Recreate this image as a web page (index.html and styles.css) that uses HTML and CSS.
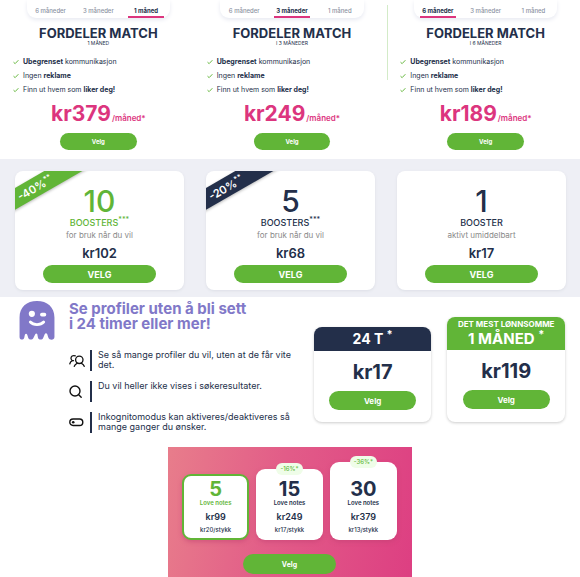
FILE: index.html
```html
<!DOCTYPE html>
<html lang="no">

<head>
  <meta charset="UTF-8">
  <meta name="viewport" content="width=device-width, initial-scale=1">
  <title>Fordeler Match</title>
  <link rel="stylesheet" href="styles.css">
</head>

<body>
  <svg width="0" height="0" class="defs" aria-hidden="true">
    <symbol id="check" viewBox="0 0 7 6">
      <path d="M.6 3.2 2.5 4.9 6.3.9" fill="none" stroke="#61b537" stroke-width="1.1" />
    </symbol>
  </svg>

  <section class="plans">
    <div class="plan">
      <nav class="tabs">
        <a href="#">6 måneder</a>
        <a href="#">3 måneder</a>
        <a href="#" class="active">1 måned</a>
      </nav>
      <h2>FORDELER MATCH</h2>
      <p class="period">1 MÅNED</p>
      <ul>
        <li><svg class="check"><use href="#check" /></svg><span><b>Ubegrenset</b> kommunikasjon</span></li>
        <li><svg class="check"><use href="#check" /></svg><span>Ingen <b>reklame</b></span></li>
        <li><svg class="check"><use href="#check" /></svg><span>Finn ut hvem som <b>liker deg!</b></span></li>
      </ul>
      <p class="plan-price">kr379 <small>/måned*</small></p>
      <button class="btn plan-btn">Velg</button>
    </div>
    <div class="plan">
      <nav class="tabs">
        <a href="#">6 måneder</a>
        <a href="#" class="active">3 måneder</a>
        <a href="#">1 måned</a>
      </nav>
      <h2>FORDELER MATCH</h2>
      <p class="period">I 3 MÅNEDER</p>
      <ul>
        <li><svg class="check"><use href="#check" /></svg><span><b>Ubegrenset</b> kommunikasjon</span></li>
        <li><svg class="check"><use href="#check" /></svg><span>Ingen <b>reklame</b></span></li>
        <li><svg class="check"><use href="#check" /></svg><span>Finn ut hvem som <b>liker deg!</b></span></li>
      </ul>
      <p class="plan-price">kr249 <small>/måned*</small></p>
      <button class="btn plan-btn">Velg</button>
    </div>
    <div class="plan divided">
      <nav class="tabs">
        <a href="#" class="active">6 måneder</a>
        <a href="#">3 måneder</a>
        <a href="#">1 måned</a>
      </nav>
      <h2>FORDELER MATCH</h2>
      <p class="period">I 6 MÅNEDER</p>
      <ul>
        <li><svg class="check"><use href="#check" /></svg><span><b>Ubegrenset</b> kommunikasjon</span></li>
        <li><svg class="check"><use href="#check" /></svg><span>Ingen <b>reklame</b></span></li>
        <li><svg class="check"><use href="#check" /></svg><span>Finn ut hvem som <b>liker deg!</b></span></li>
      </ul>
      <p class="plan-price">kr189 <small>/måned*</small></p>
      <button class="btn plan-btn">Velg</button>
    </div>
  </section>

  <section class="boosters">
    <div class="booster best">
      <div class="ribbon">-40%<sup>**</sup></div>
      <p class="amount">10</p>
      <h3>BOOSTERS<sup>***</sup></h3>
      <p class="note">for bruk når du vil</p>
      <p class="booster-price">kr102</p>
      <button class="btn booster-btn">VELG</button>
    </div>
    <div class="booster">
      <div class="ribbon">-20%<sup>**</sup></div>
      <p class="amount">5</p>
      <h3>BOOSTERS<sup>***</sup></h3>
      <p class="note">for bruk når du vil</p>
      <p class="booster-price">kr68</p>
      <button class="btn booster-btn">VELG</button>
    </div>
    <div class="booster">
      <p class="amount">1</p>
      <h3>BOOSTER</h3>
      <p class="note">aktivt umiddelbart</p>
      <p class="booster-price">kr17</p>
      <button class="btn booster-btn">VELG</button>
    </div>
  </section>

  <section class="incognito">
    <svg class="ghost" viewBox="0 0 35 38">
      <path d="M.5 16C.5 6 7.500 0 17.500 0s17 6 17 16v19c0 3.500-5 3.500-6 .5l-1-3c-.5-1.500-2-1.500-2.500 0l-1.500 3.500c-.8 2-4 2-5 0L17.800 32.500c-.5-1-1.500-1-2 0L14 36c-1 2-4 2-5 0l-1-3c-.5-1.500-1.800-1.500-2.300 0L5 36c-1 2.500-4.500 2-4.500-1z" fill="#8178c8" />
      <circle cx="12.500" cy="12.500" r="3" fill="#fff" />
      <rect x="20.500" y="11.500" width="6" height="3.500" rx="1.700" fill="#fff" />
      <path d="M11 20.500c3 3.300 10 3.300 13 0" fill="none" stroke="#fff" stroke-width="2.800" stroke-linecap="round" />
    </svg>
    <div class="info">
      <h2>Se profiler uten å bli sett<br>i 24 timer eller mer!</h2>
      <ul>
        <li>
          <svg viewBox="0 0 16 16">
            <g fill="none" stroke="#111" stroke-width="1.300" stroke-linecap="round" stroke-linejoin="round">
              <circle cx="10.300" cy="6.800" r="3.700" />
              <path d="M5.300 13.300c.5-1.600 1.500-2.400 2.800-3M12.500 10.300c1.300.6 2.200 1.400 2.700 3M6.300 2.800C3.800 2 1.800 3.300 2 5.500c.1 1 .6 1.700 1.500 2.200C2 8.300 1.100 9 .8 10.800M3.500 7.700h1" />
            </g>
          </svg>
          <p>Se så mange profiler du vil, uten at de får vite det.</p>
        </li>
        <li>
          <svg viewBox="0 0 16 16">
            <circle cx="6" cy="7" r="5" fill="none" stroke="#111" stroke-width="1.400" />
            <path d="m9.700 10.700 2.500 2.500" stroke="#111" stroke-width="1.400" stroke-linecap="round" />
          </svg>
          <p>Du vil heller ikke vises i søkeresultater.</p>
        </li>
        <li>
          <svg viewBox="0 0 16 16">
            <rect x=".8" y="4" width="13" height="6.500" rx="3.250" fill="none" stroke="#111" stroke-width="1.400" />
            <circle cx="4.200" cy="7.250" r="1.300" fill="#111" />
          </svg>
          <p>Inkognitomodus kan aktiveres/deaktiveres så mange ganger du ønsker.</p>
        </li>
      </ul>
    </div>
    <div class="passes">
      <div class="pass">
        <h3>24 T <sup>*</sup></h3>
        <p class="pass-price">kr17</p>
        <button class="btn pass-btn">Velg</button>
      </div>
      <div class="pass popular">
        <h3><small>DET MEST LØNNSOMME</small>1 MÅNED <sup>*</sup></h3>
        <p class="pass-price">kr119</p>
        <button class="btn pass-btn">Velg</button>
      </div>
    </div>
  </section>

  <section class="notes">
    <div class="note-cards">
      <div class="note-card selected">
        <p class="count">5</p>
        <p class="label">Love notes</p>
        <p class="note-price">kr99</p>
        <p class="each">kr20/stykk</p>
      </div>
      <div class="note-card medium">
        <span class="badge">-16%*</span>
        <p class="count">15</p>
        <p class="label">Love notes</p>
        <p class="note-price">kr249</p>
        <p class="each">kr17/stykk</p>
      </div>
      <div class="note-card large">
        <span class="badge">-36%*</span>
        <p class="count">30</p>
        <p class="label">Love notes</p>
        <p class="note-price">kr379</p>
        <p class="each">kr13/stykk</p>
      </div>
    </div>
    <button class="btn notes-btn">Velg</button>
  </section>
</body>

</html>
```
FILE: styles.css
```css
* {
  box-sizing: border-box;
}

body {
  margin: 0;
  background-color: #fff;
  color: #232f4a;
  font-family: Inter, "Open Sans", sans-serif;
  font-size: 8px;
}

h2,
h3,
p,
ul {
  margin: 0;
  padding: 0;
}

ul {
  list-style: none;
}

sup {
  line-height: 0;
}

.defs {
  display: none;
}

.btn {
  display: block;
  margin: 0 auto;
  padding: 0;
  border: none;
  border-radius: 10px;
  background-color: #61b537;
  color: #fff;
  font-family: inherit;
  font-weight: 700;
  cursor: pointer;
}

/* plans */
.plans {
  display: grid;
  grid-template-columns: repeat(3, 1fr);
  column-gap: 23px;
  padding: 0 9px 9px 13px;
}

.plan {
  position: relative;
  text-align: center;
}

.divided::before {
  content: "";
  position: absolute;
  left: -13px;
  top: 5px;
  width: 1px;
  height: 75px;
  background-color: #d3ebc8;
}

.tabs {
  display: grid;
  grid-template-columns: repeat(3, 1fr);
  width: 84%;
  height: 18px;
  margin: 0 auto;
  padding: 3px 6px 0;
  column-gap: 12px;
  border-radius: 0 0 9px 9px;
  box-shadow: 0 2px 4px #e8eaf2;
}

.tabs a {
  height: 15px;
  color: #8b91a1;
  font-size: 6px;
  font-weight: 500;
  line-height: 15px;
  text-decoration: none;
  white-space: nowrap;
}

.tabs .active {
  border-bottom: 2px solid #dc357e;
  color: #232f4a;
  font-weight: 700;
}

.plan h2 {
  margin-top: 8px;
  font-size: 13px;
  font-weight: 700;
  line-height: 14px;
}

.period {
  font-size: 5px;
  line-height: 6px;
}

.plan ul {
  margin-top: 9px;
  font-size: 7px;
  line-height: 14px;
  text-align: left;
}

.plan li {
  display: flex;
  align-items: center;
  gap: 4px;
}

.check {
  width: 6px;
  height: 6px;
}

.plan-price {
  margin-top: 6px;
  color: #dc357e;
  font-size: 21px;
  font-weight: 700;
  line-height: 22px;
}

.plan-price small {
  margin-left: -4px;
  font-size: 8px;
  font-weight: 600;
}

.plan-btn {
  width: 45%;
  height: 17px;
  margin-top: 4px;
  font-size: 6px;
}

/* boosters */
.boosters {
  display: grid;
  grid-template-columns: repeat(3, 1fr);
  column-gap: 22px;
  padding: 12px 14px 7px 15px;
  background-color: #eeeff5;
}

.booster {
  position: relative;
  overflow: hidden;
  padding: 14px 0 7px;
  border-radius: 8px;
  background-color: #fff;
  box-shadow: 0 1px 3px #dddfe6;
  text-align: center;
}

.ribbon {
  position: absolute;
  left: -42px;
  top: 8px;
  width: 120px;
  height: 19px;
  padding-left: 4px;
  background-color: #232f4a;
  color: #fff;
  font-size: 11px;
  font-weight: 600;
  line-height: 20px;
  transform: rotate(-30deg);
  box-shadow: 0 1px 3px #bbb;
}

.ribbon sup {
  font-size: 7px;
}

.best .ribbon {
  background-color: #61b537;
}

.amount {
  font-size: 30px;
  font-weight: 500;
  line-height: 32px;
}

.booster h3 {
  font-size: 9px;
  font-weight: 500;
  line-height: 11px;
}

.booster h3 sup {
  font-size: 7px;
}

.best .amount,
.best h3 {
  color: #61b537;
}

.note {
  margin-top: 2px;
  color: #8a8a8a;
  font-size: 8px;
  line-height: 10px;
}

.booster-price {
  margin-top: 6px;
  font-size: 13px;
  font-weight: 600;
  line-height: 14px;
}

.booster-btn {
  width: 67%;
  height: 18px;
  margin-top: 5px;
  font-size: 9px;
}

/* incognito */
.incognito {
  display: flex;
  align-items: flex-start;
  padding: 4px 15px 0 19px;
}

.ghost {
  flex: none;
  width: 36px;
  height: 39px;
}

.info {
  flex: 1;
  margin-left: 14px;
}

.info h2 {
  color: #8178c8;
  font-size: 15px;
  font-weight: 700;
  line-height: 15px;
  white-space: nowrap;
}

.info ul {
  display: grid;
  row-gap: 10px;
  margin-top: 19px;
}

.info li {
  display: flex;
  align-items: center;
}

.info li svg {
  flex: none;
  width: 16px;
  height: 16px;
  margin-right: 5px;
}

.info li p {
  height: 21px;
  padding-left: 6px;
  border-left: 2px solid #232f4a;
  font-size: 9px;
  line-height: 10px;
}

.passes {
  display: grid;
  grid-template-columns: 1fr 1fr;
  column-gap: 16px;
  align-items: end;
  flex: none;
  width: 46%;
  margin: 16px 0 0 18px;
}

.pass {
  overflow: hidden;
  padding-bottom: 12px;
  border-radius: 8px;
  box-shadow: 0 1px 3px #ccc;
  text-align: center;
}

.pass h3 {
  padding-bottom: 1px;
  background-color: #232f4a;
  font-size: 14px;
  color: #fff;
  line-height: 23px;
}

.pass sup {
  font-size: 11px;
}

.popular {
  padding-bottom: 13px;
}

.popular h3 {
  padding: 3px 0 2px;
  background-color: #61b537;
  font-size: 15px;
  line-height: 19px;
}

.popular small {
  display: block;
  font-size: 8px;
  line-height: 9px;
}

.pass-price {
  margin-top: 10px;
  font-size: 20px;
  font-weight: 700;
  line-height: 22px;
}

.pass-btn {
  width: 74%;
  height: 19px;
  margin-top: 8px;
  font-size: 8px;
}

/* love notes */
.notes {
  width: 42%;
  margin: 14px auto 0;
  padding: 15px 15px 4px 14px;
  background-image: linear-gradient(100deg, #e87d8b, #e25c88 45%, #dd3f82);
}

.note-cards {
  display: grid;
  grid-template-columns: repeat(3, 1fr);
  column-gap: 7px;
  align-items: end;
}

.note-card {
  position: relative;
  padding: 5px 0 6px;
  border-radius: 9px;
  background-color: #fff;
  box-shadow: 0 2px 4px #c0407080;
  text-align: center;
}

.selected {
  padding: 3px 0 4px;
  border: 2px solid #61b537;
}

.medium {
  padding-top: 10px;
}

.large {
  padding-top: 17px;
}

.badge {
  position: absolute;
  left: 30%;
  right: 30%;
  top: -6px;
  border-radius: 6px;
  background-color: #effde8;
  color: #61b537;
  font-size: 6px;
  font-weight: 500;
  line-height: 12px;
}

.count {
  font-size: 20px;
  font-weight: 700;
  line-height: 20px;
}

.label {
  font-size: 6px;
  font-weight: 600;
  line-height: 8px;
}

.selected .count,
.selected .label {
  color: #61b537;
}

.note-price {
  margin-top: 3px;
  font-size: 9px;
  font-weight: 600;
  line-height: 14px;
}

.each {
  margin-top: 2px;
  font-size: 6px;
  font-weight: 500;
  line-height: 8px;
}

.notes-btn {
  width: 43%;
  height: 20px;
  margin-top: 14px;
  font-size: 7px;
}
```
